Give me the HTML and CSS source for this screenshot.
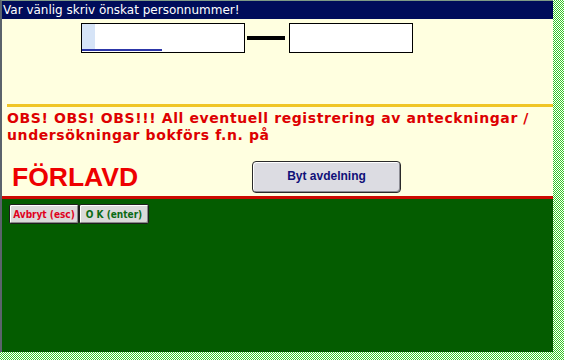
FILE: index.html
```html
<!DOCTYPE html>
<html lang="sv">
<head>
<meta charset="utf-8">
<title>Personnummer</title>
<link rel="stylesheet" href="styles.css">
</head>
<body>
<div class="screen">
  <div class="main">
    <div class="header">Var vänlig skriv önskat personnummer!</div>
    <div class="panel">
      <div class="pnr-row">
        <div class="field field-first"><span class="caret"></span><span class="underline"></span></div>
        <div class="dash"></div>
        <div class="field field-second"></div>
      </div>
      <div class="notice">
        <div class="notice-rule"></div>
        <p class="notice-text">OBS! OBS! OBS!!! All eventuell registrering av anteckningar / undersökningar bokförs f.n. på</p>
      </div>
      <div class="unit-row">
        <div class="unit-name">FÖRLAVD</div>
        <button class="switch-btn">Byt avdelning</button>
      </div>
    </div>
    <div class="divider"></div>
    <div class="actions">
      <button class="small-btn cancel">Avbryt (esc)</button>
      <button class="small-btn ok">O K (enter)</button>
    </div>
  </div>
</div>
</body>
</html>
```
FILE: styles.css
```css
html, body {
  margin: 0;
  padding: 0;
}
body {
  width: 564px;
  height: 360px;
  overflow: hidden;
}
.screen {
  width: 564px;
  height: 360px;
  box-sizing: border-box;
  padding: 0 11px 8px 0;
  background-color: #9be58f;
  background-image: url("data:image/svg+xml,%3Csvg xmlns='http://www.w3.org/2000/svg' width='2' height='2' shape-rendering='crispEdges'%3E%3Crect width='2' height='2' fill='%23ffffff'/%3E%3Crect width='1' height='1' fill='%2336c826'/%3E%3Crect x='1' y='1' width='1' height='1' fill='%2336c826'/%3E%3C/svg%3E");
  background-size: 2px 2px;
}
.main {
  height: 100%;
  display: flex;
  flex-direction: column;
  border-left: 2px solid #5b636b;
  border-top: 1px solid #7f9a86;
  box-sizing: border-box;
  background: #045c00;
}
.header {
  height: 18px;
  background: #000c5a;
  color: #ffffff;
  font-family: "DejaVu Sans", Verdana, sans-serif;
  font-size: 12px;
  line-height: 18px;
  padding-left: 1px;
}
.panel {
  height: 177px;
  background: #ffffe0;
  display: flex;
  flex-direction: column;
}
.pnr-row {
  display: flex;
  align-items: center;
  padding: 4px 0 0 79px;
}
.field {
  height: 30px;
  border: 1px solid #000000;
  box-sizing: border-box;
  background: #ffffff;
  position: relative;
}
.field-first {
  width: 164px;
}
.field-second {
  width: 124px;
}
.caret {
  position: absolute;
  left: 0;
  top: 0;
  width: 13px;
  height: 27px;
  background: #d6e4f7;
}
.underline {
  position: absolute;
  left: 0;
  top: 25px;
  width: 80px;
  height: 2px;
  background: #2c36a8;
}
.dash {
  width: 38px;
  height: 4px;
  background: #000000;
  margin: 0 4px 0 2px;
}
.notice {
  margin-top: 51px;
  padding-left: 5px;
}
.notice-rule {
  height: 3px;
  background: #f0c526;
}
.notice-text {
  margin: 3px 0 0;
  font-family: "DejaVu Sans", Verdana, sans-serif;
  font-weight: bold;
  font-size: 14px;
  letter-spacing: 0.6px;
  line-height: 17px;
  color: #dd0000;
  width: 545px;
}
.unit-row {
  display: flex;
  align-items: center;
  margin-top: 17px;
  padding-left: 10px;
}
.unit-name {
  font-family: "Liberation Sans", Arial, sans-serif;
  font-weight: bold;
  font-size: 26.5px;
  color: #ee0000;
  width: 240px;
}
.switch-btn {
  width: 149px;
  height: 32px;
  border: 1px solid #2a2a2a;
  border-radius: 4px;
  background: #dcdce2;
  box-shadow: inset 1px 1px 0 #ffffff, inset -1px -1px 0 #8c8c94;
  color: #101078;
  font-family: "Liberation Sans", Arial, sans-serif;
  font-weight: bold;
  font-size: 12px;
  padding: 0 0 2px;
}
.divider {
  height: 3px;
  background: #cc0a00;
}
.actions {
  display: flex;
  padding: 5px 0 0 7px;
}
.small-btn {
  width: 70px;
  height: 20px;
  padding: 0;
  background: #dadada;
  border: 1px solid #1e1e1e;
  border-radius: 2px;
  box-shadow: inset 1px 1px 0 #ffffff, inset -1px -1px 0 #8a8a8a;
  font-family: "DejaVu Sans Condensed", "DejaVu Sans", sans-serif;
  font-weight: bold;
  font-size: 10px;
}
.cancel {
  color: #e0001c;
}
.ok {
  color: #0a6a14;
}
```
